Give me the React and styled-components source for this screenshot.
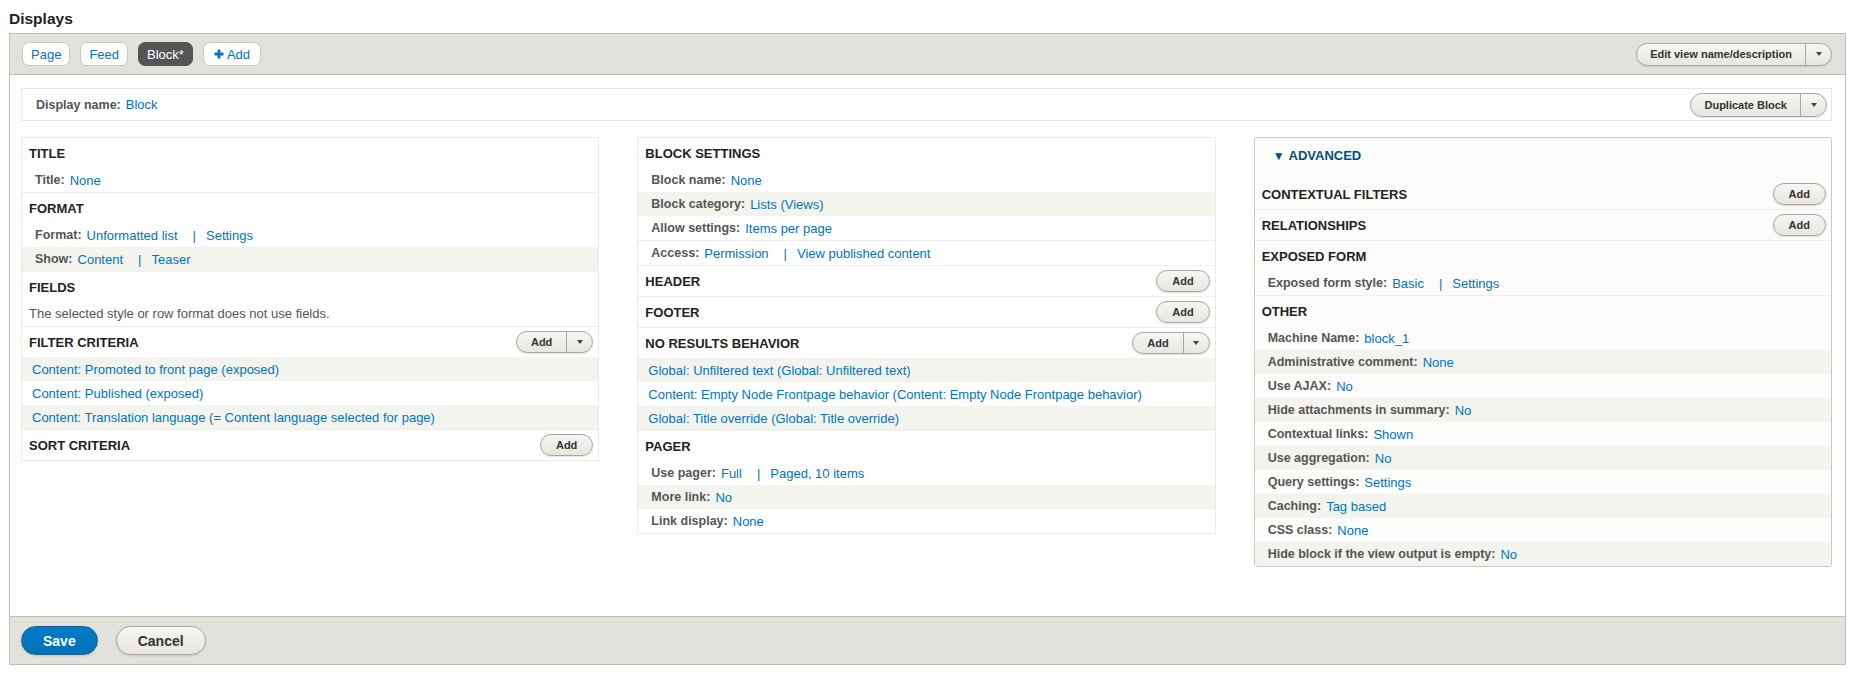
import React from 'react';
import styled, { createGlobalStyle } from 'styled-components';

const GlobalStyle = createGlobalStyle`
  body {
    margin: 0;
    padding: 0 16px 0 9px;
    background: #fff;
    color: #333;
    font-family: 'Liberation Sans', Arial, sans-serif;
    font-size: 13px;
  }
`;

const link = '#0074bd';
const shade = '#f3f4ee';

const PageTitle = styled.h2`
  margin: 9px 0 4px;
  font-size: 15.5px;
  line-height: 20px;
  font-weight: bold;
  color: #222;
`;

const Panel = styled.section`
  border: 1px solid #bfbfba;
`;

const TabBar = styled.div`
  display: flex;
  align-items: center;
  gap: 10px;
  height: 40px;
  padding: 0 13px 0 12px;
  background: #e1e2dc;
  border-bottom: 1px solid #bfbfba;
`;

const Tab = styled.span`
  display: inline-flex;
  align-items: center;
  gap: 3px;
  height: 22px;
  padding: 0 ${(p) => (p.$wide ? 10 : 8)}px;
  border-radius: 7px;
  border: 1px solid ${(p) => (p.$active ? '#555' : '#c8c8c3')};
  background: ${(p) => (p.$active ? '#555' : '#fff')};
  color: ${(p) => (p.$active ? '#fff' : link)};
  font-size: 13px;
`;

const Spacer = styled.div`
  flex: 1;
`;

const Split = styled.span`
  display: inline-flex;
  align-items: stretch;
  height: ${(p) => p.$h || 22}px;
  border: 1px solid #a6a6a6;
  border-radius: 20px;
  background: linear-gradient(to bottom, #f6f6f3, #e7e7df);
  box-shadow: 0 1px 2px rgba(0, 0, 0, 0.12);
  color: #333;
  font-size: 11px;
  font-weight: bold;
  text-transform: none;
  box-sizing: border-box;
  flex-shrink: 0;
`;

const SplitMain = styled.span`
  display: flex;
  align-items: center;
  padding: 0 ${(p) => p.$pad || 14}px;
`;

const SplitArrow = styled.span`
  display: flex;
  align-items: center;
  justify-content: center;
  width: 25px;
  border-left: 1px solid #a6a6a6;

  &::after {
    content: '';
    border-left: 3.5px solid transparent;
    border-right: 3.5px solid transparent;
    border-top: 4px solid #444;
  }
`;

const Body = styled.div`
  padding: 13px 13px 49px 11px;
`;

const NameBox = styled.div`
  display: flex;
  align-items: center;
  height: 33px;
  box-sizing: border-box;
  padding: 0 4px 0 14px;
  border: 1px solid #e6e6e3;
`;

const Columns = styled.div`
  display: grid;
  grid-template-columns: repeat(3, 1fr);
  column-gap: 38px;
  align-items: start;
  margin-top: 16px;
`;

const Column = styled.div`
  border: 1px solid ${(p) => (p.$advanced ? '#c8c8c5' : '#eaeaea')};
  border-radius: ${(p) => (p.$advanced ? '3px' : '0')};
  background: ${(p) => (p.$advanced ? '#fcfcfa' : '#fff')};
`;

const Bucket = styled.div`
  & + & {
    border-top: 1px solid #eeeeec;
  }
`;

const BucketHead = styled.div`
  display: flex;
  align-items: center;
  justify-content: space-between;
  height: 30px;
  padding: 0 5px 0 7px;
  color: #222;
  font-size: 13px;
  font-weight: bold;
  text-transform: uppercase;
`;

const Row = styled.div`
  display: flex;
  align-items: center;
  height: 24px;
  padding: 0 ${(p) => p.$indent ?? 13}px;
  background: ${(p) => (p.$shaded ? shade : 'transparent')};
  border-top: ${(p) => (p.$divided ? '1px solid #eeeeec' : 'none')};
  white-space: nowrap;
`;

const Label = styled.span`
  color: #555;
  font-weight: bold;
  font-size: 12.5px;
  margin-right: 5px;
`;

const Link = styled.span`
  color: ${link};
`;

const Sep = styled.span`
  color: ${link};
  padding: 0 10px 0 15px;
`;

const Note = styled.span`
  color: #555;
  padding-left: 7px;
  font-size: 13px;
  line-height: 24px;
`;

const AdvancedToggle = styled.div`
  height: 41px;
  box-sizing: border-box;
  padding: 8px 0 0 18px;
  line-height: 20px;
  color: #004f80;
  font-weight: bold;
  font-size: 13px;

  span {
    font-size: 12px;
    margin-right: 4px;
  }
`;

const Footer = styled.div`
  display: flex;
  gap: 18px;
  padding: 9px 11px;
  background: #e1e2dc;
  border-top: 1px solid #bfbfba;
`;

const BigButton = styled.span`
  display: inline-flex;
  align-items: center;
  height: 29px;
  box-sizing: border-box;
  padding: 0 21px;
  border-radius: 20px;
  font-size: 14px;
  font-weight: bold;
  border: 1px solid ${(p) => (p.$primary ? '#1e5c90' : '#a6a6a6')};
  color: ${(p) => (p.$primary ? '#fff' : '#333')};
  background: ${(p) =>
    p.$primary
      ? 'linear-gradient(to bottom, #007bc6, #0071b8)'
      : 'linear-gradient(to bottom, #f6f6f3, #e7e7df)'};
  box-shadow: 0 1px 2px rgba(0, 0, 0, 0.12);
`;

function PlusIcon() {
  return (
    <svg width="10" height="10" viewBox="0 0 10 10">
      <path d="M5 0.5v9M0.5 5h9" stroke={link} strokeWidth="2.8" />
    </svg>
  );
}

function AddButton({ dropdown }) {
  return (
    <Split>
      <SplitMain $pad={dropdown ? 14 : 15}>Add</SplitMain>
      {dropdown && <SplitArrow />}
    </Split>
  );
}

function Setting({ label, values, shaded, divided }) {
  return (
    <Row $shaded={shaded} $divided={divided}>
      <Label>{label}:</Label>
      {values.map((v, i) => (
        <React.Fragment key={v}>
          {i > 0 && <Sep>|</Sep>}
          <Link>{v}</Link>
        </React.Fragment>
      ))}
    </Row>
  );
}

function Handlers({ items }) {
  return items.map((text, i) => (
    <Row key={text} $indent={10} $shaded={i % 2 === 0}>
      <Link>{text}</Link>
    </Row>
  ));
}

const otherSettings = [
  ['Machine Name', 'block_1'],
  ['Administrative comment', 'None'],
  ['Use AJAX', 'No'],
  ['Hide attachments in summary', 'No'],
  ['Contextual links', 'Shown'],
  ['Use aggregation', 'No'],
  ['Query settings', 'Settings'],
  ['Caching', 'Tag based'],
  ['CSS class', 'None'],
  ['Hide block if the view output is empty', 'No'],
];

export default function App() {
  return (
    <>
      <GlobalStyle />
      <PageTitle>Displays</PageTitle>
      <Panel>
        <TabBar>
          <Tab>Page</Tab>
          <Tab>Feed</Tab>
          <Tab $active>Block*</Tab>
          <Tab $wide>
            <PlusIcon />
            Add
          </Tab>
          <Spacer />
          <Split $h={23}>
            <SplitMain $pad={13}>Edit view name/description</SplitMain>
            <SplitArrow />
          </Split>
        </TabBar>

        <Body>
          <NameBox>
            <Label>Display name:</Label>
            <Link>Block</Link>
            <Spacer />
            <Split $h={24}>
              <SplitMain $pad={13}>Duplicate Block</SplitMain>
              <SplitArrow />
            </Split>
          </NameBox>

          <Columns>
            <Column>
              <Bucket>
                <BucketHead>Title</BucketHead>
                <Setting label="Title" values={['None']} />
              </Bucket>
              <Bucket>
                <BucketHead>Format</BucketHead>
                <Setting label="Format" values={['Unformatted list', 'Settings']} />
                <Setting label="Show" values={['Content', 'Teaser']} shaded />
              </Bucket>
              <Bucket>
                <BucketHead>Fields</BucketHead>
                <Note>The selected style or row format does not use fields.</Note>
              </Bucket>
              <Bucket>
                <BucketHead>
                  Filter criteria
                  <AddButton dropdown />
                </BucketHead>
                <Handlers
                  items={[
                    'Content: Promoted to front page (exposed)',
                    'Content: Published (exposed)',
                    'Content: Translation language (= Content language selected for page)',
                  ]}
                />
              </Bucket>
              <Bucket>
                <BucketHead>
                  Sort criteria
                  <AddButton />
                </BucketHead>
              </Bucket>
            </Column>

            <Column>
              <Bucket>
                <BucketHead>Block settings</BucketHead>
                <Setting label="Block name" values={['None']} />
                <Setting label="Block category" values={['Lists (Views)']} shaded />
                <Setting label="Allow settings" values={['Items per page']} />
                <Setting label="Access" values={['Permission', 'View published content']} divided />
              </Bucket>
              <Bucket>
                <BucketHead>
                  Header
                  <AddButton />
                </BucketHead>
              </Bucket>
              <Bucket>
                <BucketHead>
                  Footer
                  <AddButton />
                </BucketHead>
              </Bucket>
              <Bucket>
                <BucketHead>
                  No results behavior
                  <AddButton dropdown />
                </BucketHead>
                <Handlers
                  items={[
                    'Global: Unfiltered text (Global: Unfiltered text)',
                    'Content: Empty Node Frontpage behavior (Content: Empty Node Frontpage behavior)',
                    'Global: Title override (Global: Title override)',
                  ]}
                />
              </Bucket>
              <Bucket>
                <BucketHead>Pager</BucketHead>
                <Setting label="Use pager" values={['Full', 'Paged, 10 items']} />
                <Setting label="More link" values={['No']} shaded />
                <Setting label="Link display" values={['None']} />
              </Bucket>
            </Column>

            <Column $advanced>
              <AdvancedToggle>
                <span>▼</span>ADVANCED
              </AdvancedToggle>
              <Bucket>
                <BucketHead>
                  Contextual filters
                  <AddButton />
                </BucketHead>
              </Bucket>
              <Bucket>
                <BucketHead>
                  Relationships
                  <AddButton />
                </BucketHead>
              </Bucket>
              <Bucket>
                <BucketHead>Exposed form</BucketHead>
                <Setting label="Exposed form style" values={['Basic', 'Settings']} />
              </Bucket>
              <Bucket>
                <BucketHead>Other</BucketHead>
                {otherSettings.map(([label, value], i) => (
                  <Setting key={label} label={label} values={[value]} shaded={i % 2 === 1} />
                ))}
              </Bucket>
            </Column>
          </Columns>
        </Body>

        <Footer>
          <BigButton $primary>Save</BigButton>
          <BigButton>Cancel</BigButton>
        </Footer>
      </Panel>
    </>
  );
}
